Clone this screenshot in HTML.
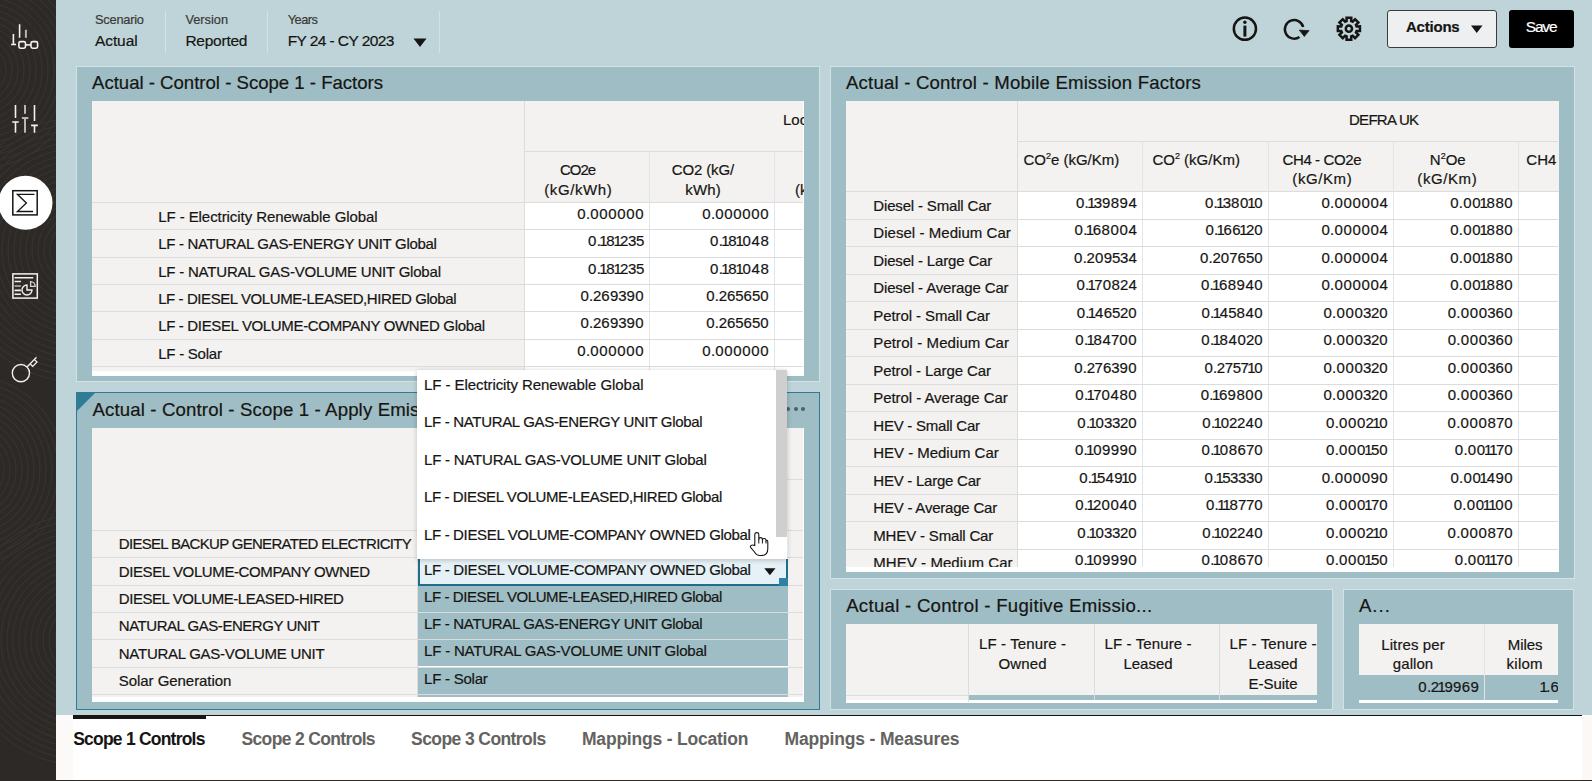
<!DOCTYPE html><html><head><meta charset="utf-8"><style>
*{box-sizing:border-box;margin:0;padding:0}
html,body{width:1592px;height:781px;overflow:hidden;background:#bfd4d9;font-family:"Liberation Sans",sans-serif;color:#161513;position:relative}
.abs{position:absolute}
.t{position:absolute;white-space:nowrap;line-height:1;-webkit-text-stroke:0.2px}
i{font-style:normal}
#side{position:absolute;left:0;top:0;width:56px;height:781px;background:#2c2926;overflow:hidden}
.panel{position:absolute;background:#9ebdc5;border:1px solid #d3e2e6}
.clip{position:absolute;overflow:hidden}
</style></head><body>
<div id="side"><svg width="56" height="781" style="position:absolute;left:0;top:0" fill="none" stroke="#37332f" stroke-width="1.2"><circle cx="-20" cy="70" r="8"/><circle cx="-20" cy="70" r="14"/><circle cx="-20" cy="70" r="20"/><circle cx="-20" cy="70" r="26"/><circle cx="-20" cy="70" r="32"/><circle cx="-20" cy="70" r="38"/><circle cx="-20" cy="70" r="44"/><circle cx="-20" cy="70" r="50"/><circle cx="-20" cy="70" r="56"/><circle cx="-20" cy="70" r="62"/><circle cx="-20" cy="70" r="68"/><circle cx="-20" cy="70" r="74"/><circle cx="-20" cy="70" r="80"/><circle cx="-20" cy="70" r="86"/><circle cx="-20" cy="70" r="92"/><circle cx="-20" cy="70" r="98"/><circle cx="80" cy="250" r="30"/><circle cx="80" cy="250" r="36"/><circle cx="80" cy="250" r="42"/><circle cx="80" cy="250" r="48"/><circle cx="80" cy="250" r="54"/><circle cx="80" cy="250" r="60"/><circle cx="80" cy="250" r="66"/><circle cx="80" cy="250" r="72"/><circle cx="80" cy="250" r="78"/><circle cx="80" cy="250" r="84"/><circle cx="80" cy="250" r="90"/><circle cx="80" cy="250" r="96"/><circle cx="80" cy="250" r="102"/><circle cx="80" cy="250" r="108"/><circle cx="80" cy="250" r="114"/><circle cx="80" cy="250" r="120"/><circle cx="80" cy="250" r="126"/><circle cx="80" cy="250" r="132"/><circle cx="-30" cy="470" r="10"/><circle cx="-30" cy="470" r="16"/><circle cx="-30" cy="470" r="22"/><circle cx="-30" cy="470" r="28"/><circle cx="-30" cy="470" r="34"/><circle cx="-30" cy="470" r="40"/><circle cx="-30" cy="470" r="46"/><circle cx="-30" cy="470" r="52"/><circle cx="-30" cy="470" r="58"/><circle cx="-30" cy="470" r="64"/><circle cx="-30" cy="470" r="70"/><circle cx="-30" cy="470" r="76"/><circle cx="-30" cy="470" r="82"/><circle cx="-30" cy="470" r="88"/><circle cx="-30" cy="470" r="94"/><circle cx="85" cy="640" r="30"/><circle cx="85" cy="640" r="36"/><circle cx="85" cy="640" r="42"/><circle cx="85" cy="640" r="48"/><circle cx="85" cy="640" r="54"/><circle cx="85" cy="640" r="60"/><circle cx="85" cy="640" r="66"/><circle cx="85" cy="640" r="72"/><circle cx="85" cy="640" r="78"/><circle cx="85" cy="640" r="84"/><circle cx="85" cy="640" r="90"/><circle cx="85" cy="640" r="96"/><circle cx="85" cy="640" r="102"/><circle cx="85" cy="640" r="108"/><circle cx="85" cy="640" r="114"/><circle cx="85" cy="640" r="120"/><circle cx="85" cy="640" r="126"/></svg>
<svg width="56" height="781" style="position:absolute;left:0;top:0" fill="none" stroke="#f4f2ef" stroke-width="1.6">
<path d="M13.4 34V44.5M11.1 44.5H16M19.6 24.2V37.8"/>
<path d="M25.9 29.8V37.8" stroke="#b9b6b2" stroke-width="2"/>
<rect x="18.9" y="41.6" width="6.6" height="6.6" rx="1.6"/><rect x="31" y="41.6" width="6.6" height="6.6" rx="1.6"/><path d="M25.5 44.9H31"/>
<path d="M15.5 105V118M12.2 122H18.8M15.5 122V132.7M34.5 105V121M31.1 125.4H37.8M34.5 125.4V132.7"/>
<path d="M25 105V113.8M21.9 118H28.3M25 118V132.7" stroke="#b9b6b2" stroke-width="2"/>
<circle cx="25.5" cy="202.8" r="27" fill="#fff" stroke="none"/>
<rect x="12.8" y="190.7" width="24.4" height="24.2" stroke="#161513" stroke-width="1.5"/>
<path d="M34.4 194.3H17.4L26.4 203L17.4 211.5H33" stroke="#161513" stroke-width="1.3"/>
<rect x="12.9" y="273.9" width="24.4" height="24.2" stroke-width="1.5"/>
<path d="M14.5 277.7H33.2M14.5 281.5H20.9M14.5 290.4H20.9M14.5 294.3H20.9"/>
<path d="M14.5 286H20.9" stroke="#b9b6b2"/>
<path d="M27 285A5 5 0 1 0 32 290H27Z" stroke-width="1.4"/>
<path d="M30.6 281.6V286.4H35.2A4.8 4.8 0 0 0 30.6 281.6Z" stroke="#d9d6d2" stroke-width="1.3"/>
<circle cx="20.9" cy="373.1" r="8.6" stroke-width="1.4"/>
<path d="M27 367L36.5 357.3M30.1 363.8L32.7 366.4L37 362L34.3 359.4" stroke-width="1.3"/>
</svg></div>
<div class="t" style="left:95.00px;top:13.56px;font-size:12.8px;letter-spacing:-0.217px;color:#3a3936">Scenario</div>
<div class="t" style="left:95.00px;top:32.88px;font-size:15.5px;letter-spacing:-0.096px;">Actual</div>
<div class="abs" style="left:165px;top:11px;width:1px;height:42px;background:#d4e2e6;"></div>
<div class="t" style="left:185.40px;top:13.56px;font-size:12.8px;letter-spacing:0.001px;color:#3a3936">Version</div>
<div class="t" style="left:185.40px;top:32.88px;font-size:15.5px;letter-spacing:-0.238px;">Reported</div>
<div class="abs" style="left:267px;top:11px;width:1px;height:42px;background:#d4e2e6;"></div>
<div class="t" style="left:287.70px;top:13.56px;font-size:12.8px;letter-spacing:-0.491px;color:#3a3936">Years</div>
<div class="t" style="left:287.70px;top:32.88px;font-size:15.5px;letter-spacing:-0.585px;">FY 24 - CY 2023</div>
<svg class="abs" style="left:413px;top:38px" width="14" height="10"><path d="M0.5 0.5H13.5L7 9Z" fill="#161513"/></svg>
<div class="abs" style="left:439px;top:11px;width:1px;height:42px;background:#d4e2e6;"></div>
<div class="panel" style="left:76px;top:66px;width:744px;height:316px;"></div>
<div class="t" style="left:92.00px;top:74.06px;font-size:18.6px;letter-spacing:-0.009px;">Actual - Control - Scope 1 - Factors</div>
<div class="clip" style="left:92px;top:101px;width:712px;height:275px;background:#fff">
<div class="abs" style="left:0px;top:0px;width:711px;height:101px;background:#f3f2f0;"></div>
<div class="abs" style="left:0px;top:101px;width:432px;height:174px;background:#f3f2f0;"></div>
<div class="abs" style="left:432px;top:0px;width:1px;height:275px;background:#dcdcdc;"></div>
<div class="abs" style="left:432px;top:50px;width:279px;height:1px;background:#dcdcdc;"></div>
<div class="abs" style="left:0px;top:101px;width:711px;height:1px;background:#dcdcdc;"></div>
<div class="abs" style="left:557px;top:50px;width:1px;height:225px;background:#e2e5e8;"></div>
<div class="abs" style="left:682px;top:50px;width:1px;height:225px;background:#e2e5e8;"></div>
<div class="t" style="left:691.00px;top:11.30px;font-size:15px;">Location</div>
<div class="t" style="left:468.00px;top:61.30px;font-size:15px;letter-spacing:-1.062px;">CO2e</div>
<div class="t" style="left:452.20px;top:80.80px;font-size:15px;letter-spacing:0.611px;">(kG/kWh)</div>
<div class="t" style="left:579.85px;top:61.30px;font-size:15px;letter-spacing:-0.149px;">CO2 (kG/</div>
<div class="t" style="left:593.35px;top:80.80px;font-size:15px;letter-spacing:0.101px;">kWh)</div>
<div class="t" style="left:703.00px;top:80.80px;font-size:15px;">(kG/kWh)</div>
<div class="abs" style="left:0px;top:128px;width:711px;height:1px;background:#dcdcdc;"></div>
<div class="t" style="left:66.20px;top:107.80px;font-size:15px;letter-spacing:-0.071px;">LF - Electricity Renewable Global</div>
<div class="t" style="left:252.00px;width:300px;text-align:right;top:104.80px;font-size:15px;"><i style="margin:0 0.33px">0</i><i style="margin:0 -0.08px">.</i><i style="margin:0 0.33px">0</i><i style="margin:0 0.33px">0</i><i style="margin:0 0.33px">0</i><i style="margin:0 0.33px">0</i><i style="margin:0 0.33px">0</i><i style="margin:0 0.33px">0</i></div>
<div class="t" style="left:377.00px;width:300px;text-align:right;top:104.80px;font-size:15px;"><i style="margin:0 0.33px">0</i><i style="margin:0 -0.08px">.</i><i style="margin:0 0.33px">0</i><i style="margin:0 0.33px">0</i><i style="margin:0 0.33px">0</i><i style="margin:0 0.33px">0</i><i style="margin:0 0.33px">0</i><i style="margin:0 0.33px">0</i></div>
<div class="abs" style="left:0px;top:156px;width:711px;height:1px;background:#dcdcdc;"></div>
<div class="t" style="left:66.20px;top:135.20px;font-size:15px;letter-spacing:-0.321px;">LF - NATURAL GAS-ENERGY UNIT Global</div>
<div class="t" style="left:252.00px;width:300px;text-align:right;top:132.20px;font-size:15px;"><i style="margin:0 0.33px">0</i><i style="margin:0 -0.08px">.</i><i style="margin:0 -1.52px">1</i><i style="margin:0 0.28px">8</i><i style="margin:0 -1.52px">1</i><i style="margin:0 -0.22px">2</i><i style="margin:0 -0.22px">3</i><i style="margin:0 -0.22px">5</i></div>
<div class="t" style="left:377.00px;width:300px;text-align:right;top:132.20px;font-size:15px;"><i style="margin:0 0.33px">0</i><i style="margin:0 -0.08px">.</i><i style="margin:0 -1.52px">1</i><i style="margin:0 0.28px">8</i><i style="margin:0 -1.52px">1</i><i style="margin:0 0.33px">0</i><i style="margin:0 0.28px">4</i><i style="margin:0 0.28px">8</i></div>
<div class="abs" style="left:0px;top:183px;width:711px;height:1px;background:#dcdcdc;"></div>
<div class="t" style="left:66.20px;top:162.60px;font-size:15px;letter-spacing:-0.206px;">LF - NATURAL GAS-VOLUME UNIT Global</div>
<div class="t" style="left:252.00px;width:300px;text-align:right;top:159.60px;font-size:15px;"><i style="margin:0 0.33px">0</i><i style="margin:0 -0.08px">.</i><i style="margin:0 -1.52px">1</i><i style="margin:0 0.28px">8</i><i style="margin:0 -1.52px">1</i><i style="margin:0 -0.22px">2</i><i style="margin:0 -0.22px">3</i><i style="margin:0 -0.22px">5</i></div>
<div class="t" style="left:377.00px;width:300px;text-align:right;top:159.60px;font-size:15px;"><i style="margin:0 0.33px">0</i><i style="margin:0 -0.08px">.</i><i style="margin:0 -1.52px">1</i><i style="margin:0 0.28px">8</i><i style="margin:0 -1.52px">1</i><i style="margin:0 0.33px">0</i><i style="margin:0 0.28px">4</i><i style="margin:0 0.28px">8</i></div>
<div class="abs" style="left:0px;top:210px;width:711px;height:1px;background:#dcdcdc;"></div>
<div class="t" style="left:66.20px;top:190.00px;font-size:15px;letter-spacing:-0.417px;">LF - DIESEL VOLUME-LEASED,HIRED Global</div>
<div class="t" style="left:252.00px;width:300px;text-align:right;top:187.00px;font-size:15px;"><i style="margin:0 0.33px">0</i><i style="margin:0 -0.08px">.</i><i style="margin:0 -0.22px">2</i><i style="margin:0 0.18px">6</i><i style="margin:0 0.18px">9</i><i style="margin:0 -0.22px">3</i><i style="margin:0 0.18px">9</i><i style="margin:0 0.33px">0</i></div>
<div class="t" style="left:377.00px;width:300px;text-align:right;top:187.00px;font-size:15px;"><i style="margin:0 0.33px">0</i><i style="margin:0 -0.08px">.</i><i style="margin:0 -0.22px">2</i><i style="margin:0 0.18px">6</i><i style="margin:0 -0.22px">5</i><i style="margin:0 0.18px">6</i><i style="margin:0 -0.22px">5</i><i style="margin:0 0.33px">0</i></div>
<div class="abs" style="left:0px;top:238px;width:711px;height:1px;background:#dcdcdc;"></div>
<div class="t" style="left:66.20px;top:217.40px;font-size:15px;letter-spacing:-0.342px;">LF - DIESEL VOLUME-COMPANY OWNED Global</div>
<div class="t" style="left:252.00px;width:300px;text-align:right;top:214.40px;font-size:15px;"><i style="margin:0 0.33px">0</i><i style="margin:0 -0.08px">.</i><i style="margin:0 -0.22px">2</i><i style="margin:0 0.18px">6</i><i style="margin:0 0.18px">9</i><i style="margin:0 -0.22px">3</i><i style="margin:0 0.18px">9</i><i style="margin:0 0.33px">0</i></div>
<div class="t" style="left:377.00px;width:300px;text-align:right;top:214.40px;font-size:15px;"><i style="margin:0 0.33px">0</i><i style="margin:0 -0.08px">.</i><i style="margin:0 -0.22px">2</i><i style="margin:0 0.18px">6</i><i style="margin:0 -0.22px">5</i><i style="margin:0 0.18px">6</i><i style="margin:0 -0.22px">5</i><i style="margin:0 0.33px">0</i></div>
<div class="abs" style="left:0px;top:265px;width:711px;height:1px;background:#dcdcdc;"></div>
<div class="t" style="left:66.20px;top:244.80px;font-size:15px;letter-spacing:-0.239px;">LF - Solar</div>
<div class="t" style="left:252.00px;width:300px;text-align:right;top:241.80px;font-size:15px;"><i style="margin:0 0.33px">0</i><i style="margin:0 -0.08px">.</i><i style="margin:0 0.33px">0</i><i style="margin:0 0.33px">0</i><i style="margin:0 0.33px">0</i><i style="margin:0 0.33px">0</i><i style="margin:0 0.33px">0</i><i style="margin:0 0.33px">0</i></div>
<div class="t" style="left:377.00px;width:300px;text-align:right;top:241.80px;font-size:15px;"><i style="margin:0 0.33px">0</i><i style="margin:0 -0.08px">.</i><i style="margin:0 0.33px">0</i><i style="margin:0 0.33px">0</i><i style="margin:0 0.33px">0</i><i style="margin:0 0.33px">0</i><i style="margin:0 0.33px">0</i><i style="margin:0 0.33px">0</i></div>
<div class="abs" style="left:0px;top:270px;width:712px;height:5px;background:#fff;"></div>
</div>
<div class="panel" style="left:76px;top:392px;width:744px;height:318px;border-color:#2f7d95"></div>
<svg class="abs" style="left:76px;top:392px" width="22" height="22"><path d="M0 0H20L0 20Z" fill="#2f7d95"/></svg>
<div class="clip" style="left:92px;top:395px;width:325px;height:30px">
<div class="t" style="left:0.50px;top:5.56px;font-size:18.6px;letter-spacing:0.145px">Actual - Control - Scope 1 - Apply Emission Factors</div>
</div>
<div class="abs" style="left:786px;top:407px;width:4px;height:4px;border-radius:2px;background:#4f5f66"></div>
<div class="abs" style="left:793.5px;top:407px;width:4px;height:4px;border-radius:2px;background:#4f5f66"></div>
<div class="abs" style="left:801px;top:407px;width:4px;height:4px;border-radius:2px;background:#4f5f66"></div>
<div class="clip" style="left:92px;top:428px;width:712px;height:274px;background:#fff">
<div class="abs" style="left:0px;top:0px;width:711px;height:102px;background:#f3f2f0;"></div>
<div class="abs" style="left:0px;top:102px;width:325px;height:172px;background:#f3f2f0;"></div>
<div class="abs" style="left:696px;top:102px;width:15px;height:172px;background:#f3f2f0;"></div>
<div class="abs" style="left:325px;top:51px;width:386px;height:1px;background:#dcdcdc;"></div>
<div class="abs" style="left:0px;top:102px;width:711px;height:1px;background:#dcdcdc;"></div>
<div class="abs" style="left:325px;top:0px;width:1px;height:274px;background:#dcdcdc;"></div>
<div class="abs" style="left:0px;top:129px;width:711px;height:1px;background:#dcdcdc;"></div>
<div class="t" style="left:26.80px;top:108.20px;font-size:15px;letter-spacing:-0.690px;">DIESEL BACKUP GENERATED ELECTRICITY</div>
<div class="abs" style="left:0px;top:157px;width:711px;height:1px;background:#dcdcdc;"></div>
<div class="t" style="left:26.80px;top:135.60px;font-size:15px;letter-spacing:-0.394px;">DIESEL VOLUME-COMPANY OWNED</div>
<div class="abs" style="left:0px;top:184px;width:711px;height:1px;background:#dcdcdc;"></div>
<div class="t" style="left:26.80px;top:163.00px;font-size:15px;letter-spacing:-0.447px;">DIESEL VOLUME-LEASED-HIRED</div>
<div class="abs" style="left:326px;top:158px;width:370px;height:26px;background:#9ebdc5;"></div>
<div class="t" style="left:332.10px;top:160.50px;font-size:15px;letter-spacing:-0.417px;">LF - DIESEL VOLUME-LEASED,HIRED Global</div>
<div class="abs" style="left:0px;top:211px;width:711px;height:1px;background:#dcdcdc;"></div>
<div class="t" style="left:26.80px;top:190.40px;font-size:15px;letter-spacing:-0.465px;">NATURAL GAS-ENERGY UNIT</div>
<div class="abs" style="left:326px;top:185px;width:370px;height:26px;background:#9ebdc5;"></div>
<div class="t" style="left:332.10px;top:187.90px;font-size:15px;letter-spacing:-0.321px;">LF - NATURAL GAS-ENERGY UNIT Global</div>
<div class="abs" style="left:0px;top:239px;width:711px;height:1px;background:#dcdcdc;"></div>
<div class="t" style="left:26.80px;top:217.80px;font-size:15px;letter-spacing:-0.268px;">NATURAL GAS-VOLUME UNIT</div>
<div class="abs" style="left:326px;top:212px;width:370px;height:26px;background:#9ebdc5;"></div>
<div class="t" style="left:332.10px;top:215.30px;font-size:15px;letter-spacing:-0.206px;">LF - NATURAL GAS-VOLUME UNIT Global</div>
<div class="abs" style="left:0px;top:266px;width:711px;height:1px;background:#dcdcdc;"></div>
<div class="t" style="left:26.80px;top:245.20px;font-size:15px;letter-spacing:-0.054px;">Solar Generation</div>
<div class="abs" style="left:326px;top:240px;width:370px;height:26px;background:#9ebdc5;"></div>
<div class="t" style="left:332.10px;top:242.70px;font-size:15px;letter-spacing:-0.239px;">LF - Solar</div>
<div class="abs" style="left:326px;top:267px;width:370px;height:3px;background:#9ebdc5;"></div>
<div class="abs" style="left:0px;top:269px;width:712px;height:5px;background:#fff;"></div>
</div>
<div class="abs" style="left:418px;top:559px;width:370px;height:27px;background:#e5f1f6;border:2px solid #1f6f8b;border-top:0"></div>
<div class="t" style="left:424.10px;top:562.40px;font-size:15px;letter-spacing:-0.342px;">LF - DIESEL VOLUME-COMPANY OWNED Global</div>
<svg class="abs" style="left:763.5px;top:568px" width="12" height="8"><path d="M0.3 0.2H11.5L5.9 7.2Z" fill="#161513"/></svg>
<div class="abs" style="left:779px;top:578px;width:9px;height:8px;background:#2b82a6;"></div>
<div class="abs" style="left:417px;top:370px;width:370px;height:189px;background:#fff;box-shadow:0 1px 5px rgba(0,0,0,0.22)"></div>
<div class="abs" style="left:776px;top:370px;width:11px;height:167px;background:#cfcfcf;"></div>
<div class="t" style="left:424.00px;top:376.90px;font-size:15px;letter-spacing:-0.071px;">LF - Electricity Renewable Global</div>
<div class="t" style="left:424.00px;top:414.40px;font-size:15px;letter-spacing:-0.321px;">LF - NATURAL GAS-ENERGY UNIT Global</div>
<div class="t" style="left:424.00px;top:451.90px;font-size:15px;letter-spacing:-0.206px;">LF - NATURAL GAS-VOLUME UNIT Global</div>
<div class="t" style="left:424.00px;top:489.40px;font-size:15px;letter-spacing:-0.417px;">LF - DIESEL VOLUME-LEASED,HIRED Global</div>
<div class="t" style="left:424.00px;top:526.90px;font-size:15px;letter-spacing:-0.342px;">LF - DIESEL VOLUME-COMPANY OWNED Global</div>
<svg class="abs" style="left:749px;top:531px" width="22" height="27" viewBox="0 0 22 27"><path d="M5.8 14.6V3.4Q5.8 1.6 7.8 1.6Q9.8 1.6 9.8 3.4V8.4Q9.8 6.6 11.6 6.6Q13.4 6.6 13.4 8.4V9.3Q13.4 7.5 15.2 7.5Q17 7.5 17 9.3V10Q17.2 8.9 18 9.3Q18.8 9.7 18.8 11V17.5Q18.8 24.5 12.5 24.5H11Q7.5 24.5 5.5 21L1.6 16.3Q1 15.2 2.2 14.4Q3.6 13.6 5.8 14.6Z" fill="#fff" stroke="#161513" stroke-width="1.1" stroke-linejoin="round"/><path d="M9.8 8.4V12.5M13.4 9.3V12.5M17 10V12.5" stroke="#161513" stroke-width="1" fill="none"/></svg>
<div class="panel" style="left:830px;top:66px;width:745px;height:513px;"></div>
<div class="t" style="left:846.00px;top:74.06px;font-size:18.6px;letter-spacing:0.187px;">Actual - Control - Mobile Emission Factors</div>
<div class="clip" style="left:846px;top:101px;width:713px;height:471px;background:#fff">
<div class="abs" style="left:0px;top:0px;width:713px;height:91px;background:#f3f2f0;"></div>
<div class="abs" style="left:0px;top:90px;width:171px;height:380px;background:#f3f2f0;"></div>
<div class="abs" style="left:171px;top:0px;width:1px;height:470px;background:#dcdcdc;"></div>
<div class="abs" style="left:171px;top:40px;width:541px;height:1px;background:#dcdcdc;"></div>
<div class="abs" style="left:0px;top:90px;width:713px;height:1px;background:#dcdcdc;"></div>
<div class="abs" style="left:296px;top:40px;width:1px;height:430px;background:#e2e5e8;"></div>
<div class="abs" style="left:422px;top:40px;width:1px;height:430px;background:#e2e5e8;"></div>
<div class="abs" style="left:547px;top:40px;width:1px;height:430px;background:#e2e5e8;"></div>
<div class="abs" style="left:672px;top:40px;width:1px;height:430px;background:#e2e5e8;"></div>
<div class="t" style="left:503.00px;top:11.30px;font-size:15px;letter-spacing:-0.717px;">DEFRA UK</div>
<div class="t" style="left:177.40px;top:51.00px;font-size:15px;">CO<sup style="font-size:9px;vertical-align:6px">2</sup>e (kG/Km)</div>
<div class="t" style="left:306.40px;top:51.00px;font-size:15px;">CO<sup style="font-size:9px;vertical-align:6px">2</sup> (kG/Km)</div>
<div class="t" style="left:436.50px;top:51.00px;font-size:15px;letter-spacing:-0.391px;">CH4 - CO2e</div>
<div class="t" style="left:446.35px;top:70.00px;font-size:15px;letter-spacing:0.579px;">(kG/Km)</div>
<div class="t" style="left:583.80px;top:51.00px;font-size:15px;">N<sup style="font-size:9px;vertical-align:6px">2</sup>Oe</div>
<div class="t" style="left:571.35px;top:70.00px;font-size:15px;letter-spacing:0.579px;">(kG/Km)</div>
<div class="t" style="left:680.30px;top:51.00px;font-size:15px;">CH4 (kG/Km)</div>
<div class="abs" style="left:0px;top:118px;width:712px;height:1px;background:#dcdcdc;"></div>
<div class="t" style="left:27.30px;top:96.80px;font-size:15px;letter-spacing:-0.168px;">Diesel - Small Car</div>
<div class="t" style="left:-9.00px;width:300px;text-align:right;top:93.80px;font-size:15px;"><i style="margin:0 0.33px">0</i><i style="margin:0 -0.08px">.</i><i style="margin:0 -1.52px">1</i><i style="margin:0 -0.22px">3</i><i style="margin:0 0.18px">9</i><i style="margin:0 0.28px">8</i><i style="margin:0 0.18px">9</i><i style="margin:0 0.28px">4</i></div>
<div class="t" style="left:117.00px;width:300px;text-align:right;top:93.80px;font-size:15px;"><i style="margin:0 0.33px">0</i><i style="margin:0 -0.08px">.</i><i style="margin:0 -1.52px">1</i><i style="margin:0 -0.22px">3</i><i style="margin:0 0.28px">8</i><i style="margin:0 0.33px">0</i><i style="margin:0 -1.52px">1</i><i style="margin:0 0.33px">0</i></div>
<div class="t" style="left:242.00px;width:300px;text-align:right;top:93.80px;font-size:15px;"><i style="margin:0 0.33px">0</i><i style="margin:0 -0.08px">.</i><i style="margin:0 0.33px">0</i><i style="margin:0 0.33px">0</i><i style="margin:0 0.33px">0</i><i style="margin:0 0.33px">0</i><i style="margin:0 0.33px">0</i><i style="margin:0 0.28px">4</i></div>
<div class="t" style="left:367.00px;width:300px;text-align:right;top:93.80px;font-size:15px;"><i style="margin:0 0.33px">0</i><i style="margin:0 -0.08px">.</i><i style="margin:0 0.33px">0</i><i style="margin:0 0.33px">0</i><i style="margin:0 -1.52px">1</i><i style="margin:0 0.28px">8</i><i style="margin:0 0.28px">8</i><i style="margin:0 0.33px">0</i></div>
<div class="abs" style="left:0px;top:145px;width:712px;height:1px;background:#dcdcdc;"></div>
<div class="t" style="left:27.30px;top:124.30px;font-size:15px;letter-spacing:0.044px;">Diesel - Medium Car</div>
<div class="t" style="left:-9.00px;width:300px;text-align:right;top:121.30px;font-size:15px;"><i style="margin:0 0.33px">0</i><i style="margin:0 -0.08px">.</i><i style="margin:0 -1.52px">1</i><i style="margin:0 0.18px">6</i><i style="margin:0 0.28px">8</i><i style="margin:0 0.33px">0</i><i style="margin:0 0.33px">0</i><i style="margin:0 0.28px">4</i></div>
<div class="t" style="left:117.00px;width:300px;text-align:right;top:121.30px;font-size:15px;"><i style="margin:0 0.33px">0</i><i style="margin:0 -0.08px">.</i><i style="margin:0 -1.52px">1</i><i style="margin:0 0.18px">6</i><i style="margin:0 0.18px">6</i><i style="margin:0 -1.52px">1</i><i style="margin:0 -0.22px">2</i><i style="margin:0 0.33px">0</i></div>
<div class="t" style="left:242.00px;width:300px;text-align:right;top:121.30px;font-size:15px;"><i style="margin:0 0.33px">0</i><i style="margin:0 -0.08px">.</i><i style="margin:0 0.33px">0</i><i style="margin:0 0.33px">0</i><i style="margin:0 0.33px">0</i><i style="margin:0 0.33px">0</i><i style="margin:0 0.33px">0</i><i style="margin:0 0.28px">4</i></div>
<div class="t" style="left:367.00px;width:300px;text-align:right;top:121.30px;font-size:15px;"><i style="margin:0 0.33px">0</i><i style="margin:0 -0.08px">.</i><i style="margin:0 0.33px">0</i><i style="margin:0 0.33px">0</i><i style="margin:0 -1.52px">1</i><i style="margin:0 0.28px">8</i><i style="margin:0 0.28px">8</i><i style="margin:0 0.33px">0</i></div>
<div class="abs" style="left:0px;top:173px;width:712px;height:1px;background:#dcdcdc;"></div>
<div class="t" style="left:27.30px;top:151.80px;font-size:15px;letter-spacing:-0.160px;">Diesel - Large Car</div>
<div class="t" style="left:-9.00px;width:300px;text-align:right;top:148.80px;font-size:15px;"><i style="margin:0 0.33px">0</i><i style="margin:0 -0.08px">.</i><i style="margin:0 -0.22px">2</i><i style="margin:0 0.33px">0</i><i style="margin:0 0.18px">9</i><i style="margin:0 -0.22px">5</i><i style="margin:0 -0.22px">3</i><i style="margin:0 0.28px">4</i></div>
<div class="t" style="left:117.00px;width:300px;text-align:right;top:148.80px;font-size:15px;"><i style="margin:0 0.33px">0</i><i style="margin:0 -0.08px">.</i><i style="margin:0 -0.22px">2</i><i style="margin:0 0.33px">0</i><i style="margin:0 -0.22px">7</i><i style="margin:0 0.18px">6</i><i style="margin:0 -0.22px">5</i><i style="margin:0 0.33px">0</i></div>
<div class="t" style="left:242.00px;width:300px;text-align:right;top:148.80px;font-size:15px;"><i style="margin:0 0.33px">0</i><i style="margin:0 -0.08px">.</i><i style="margin:0 0.33px">0</i><i style="margin:0 0.33px">0</i><i style="margin:0 0.33px">0</i><i style="margin:0 0.33px">0</i><i style="margin:0 0.33px">0</i><i style="margin:0 0.28px">4</i></div>
<div class="t" style="left:367.00px;width:300px;text-align:right;top:148.80px;font-size:15px;"><i style="margin:0 0.33px">0</i><i style="margin:0 -0.08px">.</i><i style="margin:0 0.33px">0</i><i style="margin:0 0.33px">0</i><i style="margin:0 -1.52px">1</i><i style="margin:0 0.28px">8</i><i style="margin:0 0.28px">8</i><i style="margin:0 0.33px">0</i></div>
<div class="abs" style="left:0px;top:200px;width:712px;height:1px;background:#dcdcdc;"></div>
<div class="t" style="left:27.30px;top:179.30px;font-size:15px;letter-spacing:-0.149px;">Diesel - Average Car</div>
<div class="t" style="left:-9.00px;width:300px;text-align:right;top:176.30px;font-size:15px;"><i style="margin:0 0.33px">0</i><i style="margin:0 -0.08px">.</i><i style="margin:0 -1.52px">1</i><i style="margin:0 -0.22px">7</i><i style="margin:0 0.33px">0</i><i style="margin:0 0.28px">8</i><i style="margin:0 -0.22px">2</i><i style="margin:0 0.28px">4</i></div>
<div class="t" style="left:117.00px;width:300px;text-align:right;top:176.30px;font-size:15px;"><i style="margin:0 0.33px">0</i><i style="margin:0 -0.08px">.</i><i style="margin:0 -1.52px">1</i><i style="margin:0 0.18px">6</i><i style="margin:0 0.28px">8</i><i style="margin:0 0.18px">9</i><i style="margin:0 0.28px">4</i><i style="margin:0 0.33px">0</i></div>
<div class="t" style="left:242.00px;width:300px;text-align:right;top:176.30px;font-size:15px;"><i style="margin:0 0.33px">0</i><i style="margin:0 -0.08px">.</i><i style="margin:0 0.33px">0</i><i style="margin:0 0.33px">0</i><i style="margin:0 0.33px">0</i><i style="margin:0 0.33px">0</i><i style="margin:0 0.33px">0</i><i style="margin:0 0.28px">4</i></div>
<div class="t" style="left:367.00px;width:300px;text-align:right;top:176.30px;font-size:15px;"><i style="margin:0 0.33px">0</i><i style="margin:0 -0.08px">.</i><i style="margin:0 0.33px">0</i><i style="margin:0 0.33px">0</i><i style="margin:0 -1.52px">1</i><i style="margin:0 0.28px">8</i><i style="margin:0 0.28px">8</i><i style="margin:0 0.33px">0</i></div>
<div class="abs" style="left:0px;top:228px;width:712px;height:1px;background:#dcdcdc;"></div>
<div class="t" style="left:27.30px;top:206.80px;font-size:15px;letter-spacing:-0.092px;">Petrol - Small Car</div>
<div class="t" style="left:-9.00px;width:300px;text-align:right;top:203.80px;font-size:15px;"><i style="margin:0 0.33px">0</i><i style="margin:0 -0.08px">.</i><i style="margin:0 -1.52px">1</i><i style="margin:0 0.28px">4</i><i style="margin:0 0.18px">6</i><i style="margin:0 -0.22px">5</i><i style="margin:0 -0.22px">2</i><i style="margin:0 0.33px">0</i></div>
<div class="t" style="left:117.00px;width:300px;text-align:right;top:203.80px;font-size:15px;"><i style="margin:0 0.33px">0</i><i style="margin:0 -0.08px">.</i><i style="margin:0 -1.52px">1</i><i style="margin:0 0.28px">4</i><i style="margin:0 -0.22px">5</i><i style="margin:0 0.28px">8</i><i style="margin:0 0.28px">4</i><i style="margin:0 0.33px">0</i></div>
<div class="t" style="left:242.00px;width:300px;text-align:right;top:203.80px;font-size:15px;"><i style="margin:0 0.33px">0</i><i style="margin:0 -0.08px">.</i><i style="margin:0 0.33px">0</i><i style="margin:0 0.33px">0</i><i style="margin:0 0.33px">0</i><i style="margin:0 -0.22px">3</i><i style="margin:0 -0.22px">2</i><i style="margin:0 0.33px">0</i></div>
<div class="t" style="left:367.00px;width:300px;text-align:right;top:203.80px;font-size:15px;"><i style="margin:0 0.33px">0</i><i style="margin:0 -0.08px">.</i><i style="margin:0 0.33px">0</i><i style="margin:0 0.33px">0</i><i style="margin:0 0.33px">0</i><i style="margin:0 -0.22px">3</i><i style="margin:0 0.18px">6</i><i style="margin:0 0.33px">0</i></div>
<div class="abs" style="left:0px;top:255px;width:712px;height:1px;background:#dcdcdc;"></div>
<div class="t" style="left:27.30px;top:234.30px;font-size:15px;letter-spacing:0.083px;">Petrol - Medium Car</div>
<div class="t" style="left:-9.00px;width:300px;text-align:right;top:231.30px;font-size:15px;"><i style="margin:0 0.33px">0</i><i style="margin:0 -0.08px">.</i><i style="margin:0 -1.52px">1</i><i style="margin:0 0.28px">8</i><i style="margin:0 0.28px">4</i><i style="margin:0 -0.22px">7</i><i style="margin:0 0.33px">0</i><i style="margin:0 0.33px">0</i></div>
<div class="t" style="left:117.00px;width:300px;text-align:right;top:231.30px;font-size:15px;"><i style="margin:0 0.33px">0</i><i style="margin:0 -0.08px">.</i><i style="margin:0 -1.52px">1</i><i style="margin:0 0.28px">8</i><i style="margin:0 0.28px">4</i><i style="margin:0 0.33px">0</i><i style="margin:0 -0.22px">2</i><i style="margin:0 0.33px">0</i></div>
<div class="t" style="left:242.00px;width:300px;text-align:right;top:231.30px;font-size:15px;"><i style="margin:0 0.33px">0</i><i style="margin:0 -0.08px">.</i><i style="margin:0 0.33px">0</i><i style="margin:0 0.33px">0</i><i style="margin:0 0.33px">0</i><i style="margin:0 -0.22px">3</i><i style="margin:0 -0.22px">2</i><i style="margin:0 0.33px">0</i></div>
<div class="t" style="left:367.00px;width:300px;text-align:right;top:231.30px;font-size:15px;"><i style="margin:0 0.33px">0</i><i style="margin:0 -0.08px">.</i><i style="margin:0 0.33px">0</i><i style="margin:0 0.33px">0</i><i style="margin:0 0.33px">0</i><i style="margin:0 -0.22px">3</i><i style="margin:0 0.18px">6</i><i style="margin:0 0.33px">0</i></div>
<div class="abs" style="left:0px;top:283px;width:712px;height:1px;background:#dcdcdc;"></div>
<div class="t" style="left:27.30px;top:261.80px;font-size:15px;letter-spacing:-0.084px;">Petrol - Large Car</div>
<div class="t" style="left:-9.00px;width:300px;text-align:right;top:258.80px;font-size:15px;"><i style="margin:0 0.33px">0</i><i style="margin:0 -0.08px">.</i><i style="margin:0 -0.22px">2</i><i style="margin:0 -0.22px">7</i><i style="margin:0 0.18px">6</i><i style="margin:0 -0.22px">3</i><i style="margin:0 0.18px">9</i><i style="margin:0 0.33px">0</i></div>
<div class="t" style="left:117.00px;width:300px;text-align:right;top:258.80px;font-size:15px;"><i style="margin:0 0.33px">0</i><i style="margin:0 -0.08px">.</i><i style="margin:0 -0.22px">2</i><i style="margin:0 -0.22px">7</i><i style="margin:0 -0.22px">5</i><i style="margin:0 -0.22px">7</i><i style="margin:0 -1.52px">1</i><i style="margin:0 0.33px">0</i></div>
<div class="t" style="left:242.00px;width:300px;text-align:right;top:258.80px;font-size:15px;"><i style="margin:0 0.33px">0</i><i style="margin:0 -0.08px">.</i><i style="margin:0 0.33px">0</i><i style="margin:0 0.33px">0</i><i style="margin:0 0.33px">0</i><i style="margin:0 -0.22px">3</i><i style="margin:0 -0.22px">2</i><i style="margin:0 0.33px">0</i></div>
<div class="t" style="left:367.00px;width:300px;text-align:right;top:258.80px;font-size:15px;"><i style="margin:0 0.33px">0</i><i style="margin:0 -0.08px">.</i><i style="margin:0 0.33px">0</i><i style="margin:0 0.33px">0</i><i style="margin:0 0.33px">0</i><i style="margin:0 -0.22px">3</i><i style="margin:0 0.18px">6</i><i style="margin:0 0.33px">0</i></div>
<div class="abs" style="left:0px;top:310px;width:712px;height:1px;background:#dcdcdc;"></div>
<div class="t" style="left:27.30px;top:289.30px;font-size:15px;letter-spacing:-0.065px;">Petrol - Average Car</div>
<div class="t" style="left:-9.00px;width:300px;text-align:right;top:286.30px;font-size:15px;"><i style="margin:0 0.33px">0</i><i style="margin:0 -0.08px">.</i><i style="margin:0 -1.52px">1</i><i style="margin:0 -0.22px">7</i><i style="margin:0 0.33px">0</i><i style="margin:0 0.28px">4</i><i style="margin:0 0.28px">8</i><i style="margin:0 0.33px">0</i></div>
<div class="t" style="left:117.00px;width:300px;text-align:right;top:286.30px;font-size:15px;"><i style="margin:0 0.33px">0</i><i style="margin:0 -0.08px">.</i><i style="margin:0 -1.52px">1</i><i style="margin:0 0.18px">6</i><i style="margin:0 0.18px">9</i><i style="margin:0 0.28px">8</i><i style="margin:0 0.33px">0</i><i style="margin:0 0.33px">0</i></div>
<div class="t" style="left:242.00px;width:300px;text-align:right;top:286.30px;font-size:15px;"><i style="margin:0 0.33px">0</i><i style="margin:0 -0.08px">.</i><i style="margin:0 0.33px">0</i><i style="margin:0 0.33px">0</i><i style="margin:0 0.33px">0</i><i style="margin:0 -0.22px">3</i><i style="margin:0 -0.22px">2</i><i style="margin:0 0.33px">0</i></div>
<div class="t" style="left:367.00px;width:300px;text-align:right;top:286.30px;font-size:15px;"><i style="margin:0 0.33px">0</i><i style="margin:0 -0.08px">.</i><i style="margin:0 0.33px">0</i><i style="margin:0 0.33px">0</i><i style="margin:0 0.33px">0</i><i style="margin:0 -0.22px">3</i><i style="margin:0 0.18px">6</i><i style="margin:0 0.33px">0</i></div>
<div class="abs" style="left:0px;top:338px;width:712px;height:1px;background:#dcdcdc;"></div>
<div class="t" style="left:27.30px;top:316.80px;font-size:15px;letter-spacing:-0.237px;">HEV - Small Car</div>
<div class="t" style="left:-9.00px;width:300px;text-align:right;top:313.80px;font-size:15px;"><i style="margin:0 0.33px">0</i><i style="margin:0 -0.08px">.</i><i style="margin:0 -1.52px">1</i><i style="margin:0 0.33px">0</i><i style="margin:0 -0.22px">3</i><i style="margin:0 -0.22px">3</i><i style="margin:0 -0.22px">2</i><i style="margin:0 0.33px">0</i></div>
<div class="t" style="left:117.00px;width:300px;text-align:right;top:313.80px;font-size:15px;"><i style="margin:0 0.33px">0</i><i style="margin:0 -0.08px">.</i><i style="margin:0 -1.52px">1</i><i style="margin:0 0.33px">0</i><i style="margin:0 -0.22px">2</i><i style="margin:0 -0.22px">2</i><i style="margin:0 0.28px">4</i><i style="margin:0 0.33px">0</i></div>
<div class="t" style="left:242.00px;width:300px;text-align:right;top:313.80px;font-size:15px;"><i style="margin:0 0.33px">0</i><i style="margin:0 -0.08px">.</i><i style="margin:0 0.33px">0</i><i style="margin:0 0.33px">0</i><i style="margin:0 0.33px">0</i><i style="margin:0 -0.22px">2</i><i style="margin:0 -1.52px">1</i><i style="margin:0 0.33px">0</i></div>
<div class="t" style="left:367.00px;width:300px;text-align:right;top:313.80px;font-size:15px;"><i style="margin:0 0.33px">0</i><i style="margin:0 -0.08px">.</i><i style="margin:0 0.33px">0</i><i style="margin:0 0.33px">0</i><i style="margin:0 0.33px">0</i><i style="margin:0 0.28px">8</i><i style="margin:0 -0.22px">7</i><i style="margin:0 0.33px">0</i></div>
<div class="abs" style="left:0px;top:365px;width:712px;height:1px;background:#dcdcdc;"></div>
<div class="t" style="left:27.30px;top:344.30px;font-size:15px;letter-spacing:-0.031px;">HEV - Medium Car</div>
<div class="t" style="left:-9.00px;width:300px;text-align:right;top:341.30px;font-size:15px;"><i style="margin:0 0.33px">0</i><i style="margin:0 -0.08px">.</i><i style="margin:0 -1.52px">1</i><i style="margin:0 0.33px">0</i><i style="margin:0 0.18px">9</i><i style="margin:0 0.18px">9</i><i style="margin:0 0.18px">9</i><i style="margin:0 0.33px">0</i></div>
<div class="t" style="left:117.00px;width:300px;text-align:right;top:341.30px;font-size:15px;"><i style="margin:0 0.33px">0</i><i style="margin:0 -0.08px">.</i><i style="margin:0 -1.52px">1</i><i style="margin:0 0.33px">0</i><i style="margin:0 0.28px">8</i><i style="margin:0 0.18px">6</i><i style="margin:0 -0.22px">7</i><i style="margin:0 0.33px">0</i></div>
<div class="t" style="left:242.00px;width:300px;text-align:right;top:341.30px;font-size:15px;"><i style="margin:0 0.33px">0</i><i style="margin:0 -0.08px">.</i><i style="margin:0 0.33px">0</i><i style="margin:0 0.33px">0</i><i style="margin:0 0.33px">0</i><i style="margin:0 -1.52px">1</i><i style="margin:0 -0.22px">5</i><i style="margin:0 0.33px">0</i></div>
<div class="t" style="left:367.00px;width:300px;text-align:right;top:341.30px;font-size:15px;"><i style="margin:0 0.33px">0</i><i style="margin:0 -0.08px">.</i><i style="margin:0 0.33px">0</i><i style="margin:0 0.33px">0</i><i style="margin:0 -1.52px">1</i><i style="margin:0 -1.52px">1</i><i style="margin:0 -0.22px">7</i><i style="margin:0 0.33px">0</i></div>
<div class="abs" style="left:0px;top:393px;width:712px;height:1px;background:#dcdcdc;"></div>
<div class="t" style="left:27.30px;top:371.80px;font-size:15px;letter-spacing:-0.241px;">HEV - Large Car</div>
<div class="t" style="left:-9.00px;width:300px;text-align:right;top:368.80px;font-size:15px;"><i style="margin:0 0.33px">0</i><i style="margin:0 -0.08px">.</i><i style="margin:0 -1.52px">1</i><i style="margin:0 -0.22px">5</i><i style="margin:0 0.28px">4</i><i style="margin:0 0.18px">9</i><i style="margin:0 -1.52px">1</i><i style="margin:0 0.33px">0</i></div>
<div class="t" style="left:117.00px;width:300px;text-align:right;top:368.80px;font-size:15px;"><i style="margin:0 0.33px">0</i><i style="margin:0 -0.08px">.</i><i style="margin:0 -1.52px">1</i><i style="margin:0 -0.22px">5</i><i style="margin:0 -0.22px">3</i><i style="margin:0 -0.22px">3</i><i style="margin:0 -0.22px">3</i><i style="margin:0 0.33px">0</i></div>
<div class="t" style="left:242.00px;width:300px;text-align:right;top:368.80px;font-size:15px;"><i style="margin:0 0.33px">0</i><i style="margin:0 -0.08px">.</i><i style="margin:0 0.33px">0</i><i style="margin:0 0.33px">0</i><i style="margin:0 0.33px">0</i><i style="margin:0 0.33px">0</i><i style="margin:0 0.18px">9</i><i style="margin:0 0.33px">0</i></div>
<div class="t" style="left:367.00px;width:300px;text-align:right;top:368.80px;font-size:15px;"><i style="margin:0 0.33px">0</i><i style="margin:0 -0.08px">.</i><i style="margin:0 0.33px">0</i><i style="margin:0 0.33px">0</i><i style="margin:0 -1.52px">1</i><i style="margin:0 0.28px">4</i><i style="margin:0 0.18px">9</i><i style="margin:0 0.33px">0</i></div>
<div class="abs" style="left:0px;top:420px;width:712px;height:1px;background:#dcdcdc;"></div>
<div class="t" style="left:27.30px;top:399.30px;font-size:15px;letter-spacing:-0.212px;">HEV - Average Car</div>
<div class="t" style="left:-9.00px;width:300px;text-align:right;top:396.30px;font-size:15px;"><i style="margin:0 0.33px">0</i><i style="margin:0 -0.08px">.</i><i style="margin:0 -1.52px">1</i><i style="margin:0 -0.22px">2</i><i style="margin:0 0.33px">0</i><i style="margin:0 0.33px">0</i><i style="margin:0 0.28px">4</i><i style="margin:0 0.33px">0</i></div>
<div class="t" style="left:117.00px;width:300px;text-align:right;top:396.30px;font-size:15px;"><i style="margin:0 0.33px">0</i><i style="margin:0 -0.08px">.</i><i style="margin:0 -1.52px">1</i><i style="margin:0 -1.52px">1</i><i style="margin:0 0.28px">8</i><i style="margin:0 -0.22px">7</i><i style="margin:0 -0.22px">7</i><i style="margin:0 0.33px">0</i></div>
<div class="t" style="left:242.00px;width:300px;text-align:right;top:396.30px;font-size:15px;"><i style="margin:0 0.33px">0</i><i style="margin:0 -0.08px">.</i><i style="margin:0 0.33px">0</i><i style="margin:0 0.33px">0</i><i style="margin:0 0.33px">0</i><i style="margin:0 -1.52px">1</i><i style="margin:0 -0.22px">7</i><i style="margin:0 0.33px">0</i></div>
<div class="t" style="left:367.00px;width:300px;text-align:right;top:396.30px;font-size:15px;"><i style="margin:0 0.33px">0</i><i style="margin:0 -0.08px">.</i><i style="margin:0 0.33px">0</i><i style="margin:0 0.33px">0</i><i style="margin:0 -1.52px">1</i><i style="margin:0 -1.52px">1</i><i style="margin:0 0.33px">0</i><i style="margin:0 0.33px">0</i></div>
<div class="abs" style="left:0px;top:448px;width:712px;height:1px;background:#dcdcdc;"></div>
<div class="t" style="left:27.30px;top:426.80px;font-size:15px;letter-spacing:-0.168px;">MHEV - Small Car</div>
<div class="t" style="left:-9.00px;width:300px;text-align:right;top:423.80px;font-size:15px;"><i style="margin:0 0.33px">0</i><i style="margin:0 -0.08px">.</i><i style="margin:0 -1.52px">1</i><i style="margin:0 0.33px">0</i><i style="margin:0 -0.22px">3</i><i style="margin:0 -0.22px">3</i><i style="margin:0 -0.22px">2</i><i style="margin:0 0.33px">0</i></div>
<div class="t" style="left:117.00px;width:300px;text-align:right;top:423.80px;font-size:15px;"><i style="margin:0 0.33px">0</i><i style="margin:0 -0.08px">.</i><i style="margin:0 -1.52px">1</i><i style="margin:0 0.33px">0</i><i style="margin:0 -0.22px">2</i><i style="margin:0 -0.22px">2</i><i style="margin:0 0.28px">4</i><i style="margin:0 0.33px">0</i></div>
<div class="t" style="left:242.00px;width:300px;text-align:right;top:423.80px;font-size:15px;"><i style="margin:0 0.33px">0</i><i style="margin:0 -0.08px">.</i><i style="margin:0 0.33px">0</i><i style="margin:0 0.33px">0</i><i style="margin:0 0.33px">0</i><i style="margin:0 -0.22px">2</i><i style="margin:0 -1.52px">1</i><i style="margin:0 0.33px">0</i></div>
<div class="t" style="left:367.00px;width:300px;text-align:right;top:423.80px;font-size:15px;"><i style="margin:0 0.33px">0</i><i style="margin:0 -0.08px">.</i><i style="margin:0 0.33px">0</i><i style="margin:0 0.33px">0</i><i style="margin:0 0.33px">0</i><i style="margin:0 0.28px">8</i><i style="margin:0 -0.22px">7</i><i style="margin:0 0.33px">0</i></div>
<div class="abs" style="left:0px;top:475px;width:712px;height:1px;background:#dcdcdc;"></div>
<div class="t" style="left:27.30px;top:454.30px;font-size:15px;letter-spacing:0.059px;">MHEV - Medium Car</div>
<div class="t" style="left:-9.00px;width:300px;text-align:right;top:451.30px;font-size:15px;"><i style="margin:0 0.33px">0</i><i style="margin:0 -0.08px">.</i><i style="margin:0 -1.52px">1</i><i style="margin:0 0.33px">0</i><i style="margin:0 0.18px">9</i><i style="margin:0 0.18px">9</i><i style="margin:0 0.18px">9</i><i style="margin:0 0.33px">0</i></div>
<div class="t" style="left:117.00px;width:300px;text-align:right;top:451.30px;font-size:15px;"><i style="margin:0 0.33px">0</i><i style="margin:0 -0.08px">.</i><i style="margin:0 -1.52px">1</i><i style="margin:0 0.33px">0</i><i style="margin:0 0.28px">8</i><i style="margin:0 0.18px">6</i><i style="margin:0 -0.22px">7</i><i style="margin:0 0.33px">0</i></div>
<div class="t" style="left:242.00px;width:300px;text-align:right;top:451.30px;font-size:15px;"><i style="margin:0 0.33px">0</i><i style="margin:0 -0.08px">.</i><i style="margin:0 0.33px">0</i><i style="margin:0 0.33px">0</i><i style="margin:0 0.33px">0</i><i style="margin:0 -1.52px">1</i><i style="margin:0 -0.22px">5</i><i style="margin:0 0.33px">0</i></div>
<div class="t" style="left:367.00px;width:300px;text-align:right;top:451.30px;font-size:15px;"><i style="margin:0 0.33px">0</i><i style="margin:0 -0.08px">.</i><i style="margin:0 0.33px">0</i><i style="margin:0 0.33px">0</i><i style="margin:0 -1.52px">1</i><i style="margin:0 -1.52px">1</i><i style="margin:0 -0.22px">7</i><i style="margin:0 0.33px">0</i></div>
<div class="abs" style="left:0px;top:466px;width:713px;height:5px;background:#fff;"></div>
</div>
<div class="panel" style="left:830px;top:589px;width:503px;height:121px;"></div>
<div class="t" style="left:846.20px;top:596.96px;font-size:18.6px;letter-spacing:0.280px;">Actual - Control - Fugitive Emissio...</div>
<div class="clip" style="left:846px;top:624px;width:471px;height:79px;background:#fff">
<div class="abs" style="left:0px;top:0px;width:471px;height:71px;background:#f3f2f0;"></div>
<div class="abs" style="left:122px;top:0px;width:1px;height:78px;background:#dcdcdc;"></div>
<div class="abs" style="left:0px;top:71px;width:122px;height:1px;background:#d8dde6;"></div>
<div class="abs" style="left:0px;top:72px;width:122px;height:4px;background:#f5f3f1;"></div>
<div class="abs" style="left:123px;top:71px;width:348px;height:5px;background:#9ebdc5;"></div>
<div class="abs" style="left:248px;top:0px;width:1px;height:76px;background:#dcdcdc;"></div>
<div class="abs" style="left:373px;top:0px;width:1px;height:76px;background:#dcdcdc;"></div>
<div class="t" style="left:133.00px;top:12.00px;font-size:15px;letter-spacing:0.117px;">LF - Tenure -</div>
<div class="t" style="left:152.50px;top:32.00px;font-size:15px;letter-spacing:0.118px;">Owned</div>
<div class="t" style="left:258.50px;top:12.00px;font-size:15px;letter-spacing:0.117px;">LF - Tenure -</div>
<div class="t" style="left:277.39px;top:32.00px;font-size:15px;">Leased</div>
<div class="t" style="left:383.50px;top:12.00px;font-size:15px;letter-spacing:0.117px;">LF - Tenure -</div>
<div class="t" style="left:402.39px;top:32.00px;font-size:15px;">Leased</div>
<div class="t" style="left:402.40px;top:52.00px;font-size:15px;">E-Suite</div>
</div>
<div class="panel" style="left:1343px;top:589px;width:231px;height:121px;"></div>
<div class="t" style="left:1359.00px;top:596.96px;font-size:18.6px;letter-spacing:0.964px;">A...</div>
<div class="clip" style="left:1359px;top:624px;width:199px;height:79px;background:#fff">
<div class="abs" style="left:0px;top:0px;width:199px;height:51px;background:#f3f2f0;"></div>
<div class="abs" style="left:0px;top:51px;width:199px;height:25px;background:#9ebdc5;"></div>
<div class="abs" style="left:125px;top:0px;width:1px;height:76px;background:#e4e4e4;"></div>
<div class="t" style="left:22.20px;top:12.80px;font-size:15px;letter-spacing:0.119px;">Litres per</div>
<div class="t" style="left:33.80px;top:32.30px;font-size:15px;letter-spacing:0.073px;">gallon</div>
<div class="t" style="left:148.85px;top:12.80px;font-size:15px;letter-spacing:-0.076px;">Miles</div>
<div class="t" style="left:147.60px;top:32.30px;font-size:15px;letter-spacing:0.249px;">kilom</div>
<div class="t" style="left:-180.00px;width:300px;text-align:right;top:55.30px;font-size:15px;"><i style="margin:0 0.33px">0</i><i style="margin:0 -0.08px">.</i><i style="margin:0 -0.22px">2</i><i style="margin:0 -1.52px">1</i><i style="margin:0 0.18px">9</i><i style="margin:0 0.18px">9</i><i style="margin:0 0.18px">6</i><i style="margin:0 0.18px">9</i></div>
<div class="t" style="left:-100.00px;width:300px;text-align:right;top:55.30px;font-size:15px;"><i style="margin:0 -1.52px">1</i><i style="margin:0 -0.08px">.</i><i style="margin:0 0.18px">6</i></div>
</div>
<svg class="abs" style="left:1225px;top:10px" width="140" height="38" fill="none" stroke="#161513" stroke-width="2.5">
<circle cx="19.9" cy="18.7" r="11.1"/>
<path d="M19.9 15.6V26.6" stroke-width="3"/><circle cx="19.9" cy="12.2" r="1.7" fill="#161513" stroke="none"/>
<path d="M74.5 27.0A9.3 9.3 0 1 1 78.2 17.0"/>
<path d="M74.2 20.0L84.2 20.6L79.3 26.6Z" fill="#161513" stroke-width="0.6" stroke-linejoin="round"/>
<g transform="translate(123.9 18.7)"><path d="M-2.29 -7.67 L-2.36 -11.05 L2.36 -11.05 L2.29 -7.67 L3.80 -7.04 L6.15 -9.48 L9.48 -6.15 L7.04 -3.80 L7.67 -2.29 L11.05 -2.36 L11.05 2.36 L7.67 2.29 L7.04 3.80 L9.48 6.15 L6.15 9.48 L3.80 7.04 L2.29 7.67 L2.36 11.05 L-2.36 11.05 L-2.29 7.67 L-3.80 7.04 L-6.15 9.48 L-9.48 6.15 L-7.04 3.80 L-7.67 2.29 L-11.05 2.36 L-11.05 -2.36 L-7.67 -2.29 L-7.04 -3.80 L-9.48 -6.15 L-6.15 -9.48 L-3.80 -7.04Z" stroke-linejoin="miter"/><circle cx="0" cy="0" r="3.1" /></g>
</svg>
<div class="abs" style="left:1387px;top:10px;width:110px;height:38px;background:#edeff0;border:1px solid #3b3b3b;border-radius:3px"></div>
<div class="t" style="left:1406.00px;top:19.00px;font-size:15px;font-weight:bold;letter-spacing:-0.218px;">Actions</div>
<svg class="abs" style="left:1471px;top:25px" width="12" height="9"><path d="M0 0.5H11.5L5.75 8Z" fill="#161513"/></svg>
<div class="abs" style="left:1509px;top:10px;width:65px;height:38px;background:#000;border-radius:3px"></div>
<div class="t" style="left:1525.80px;top:18.78px;font-size:15.5px;letter-spacing:-1.210px;color:#fff">Save</div>
<div class="abs" style="left:56px;top:715px;width:1536px;height:66px;background:#fff;"></div>
<div class="abs" style="left:56px;top:715px;width:17px;height:65px;background:#fbfaf9;"></div>
<div class="abs" style="left:73px;top:715px;width:1509px;height:1px;background:#161513;"></div>
<div class="abs" style="left:73px;top:715px;width:133px;height:4px;background:#161513;"></div>
<div class="t" style="left:73.20px;top:730.99px;font-size:17.5px;font-weight:bold;letter-spacing:-0.781px;-webkit-text-stroke:0;">Scope 1 Controls</div>
<div class="t" style="left:241.50px;top:730.99px;font-size:17.5px;font-weight:bold;letter-spacing:-0.654px;color:#64635f;-webkit-text-stroke:0;">Scope 2 Controls</div>
<div class="t" style="left:411.10px;top:730.99px;font-size:17.5px;font-weight:bold;letter-spacing:-0.588px;color:#64635f;-webkit-text-stroke:0;">Scope 3 Controls</div>
<div class="t" style="left:582.00px;top:730.99px;font-size:17.5px;font-weight:bold;letter-spacing:-0.207px;color:#64635f;-webkit-text-stroke:0;">Mappings - Location</div>
<div class="t" style="left:784.60px;top:730.99px;font-size:17.5px;font-weight:bold;letter-spacing:-0.170px;color:#64635f;-webkit-text-stroke:0;">Mappings - Measures</div>
<div class="abs" style="left:1582px;top:715px;width:10px;height:65px;background:#fbf8f6;"></div>
<div class="abs" style="left:0px;top:780px;width:1592px;height:1px;background:#2c2926;"></div>
</body></html>
